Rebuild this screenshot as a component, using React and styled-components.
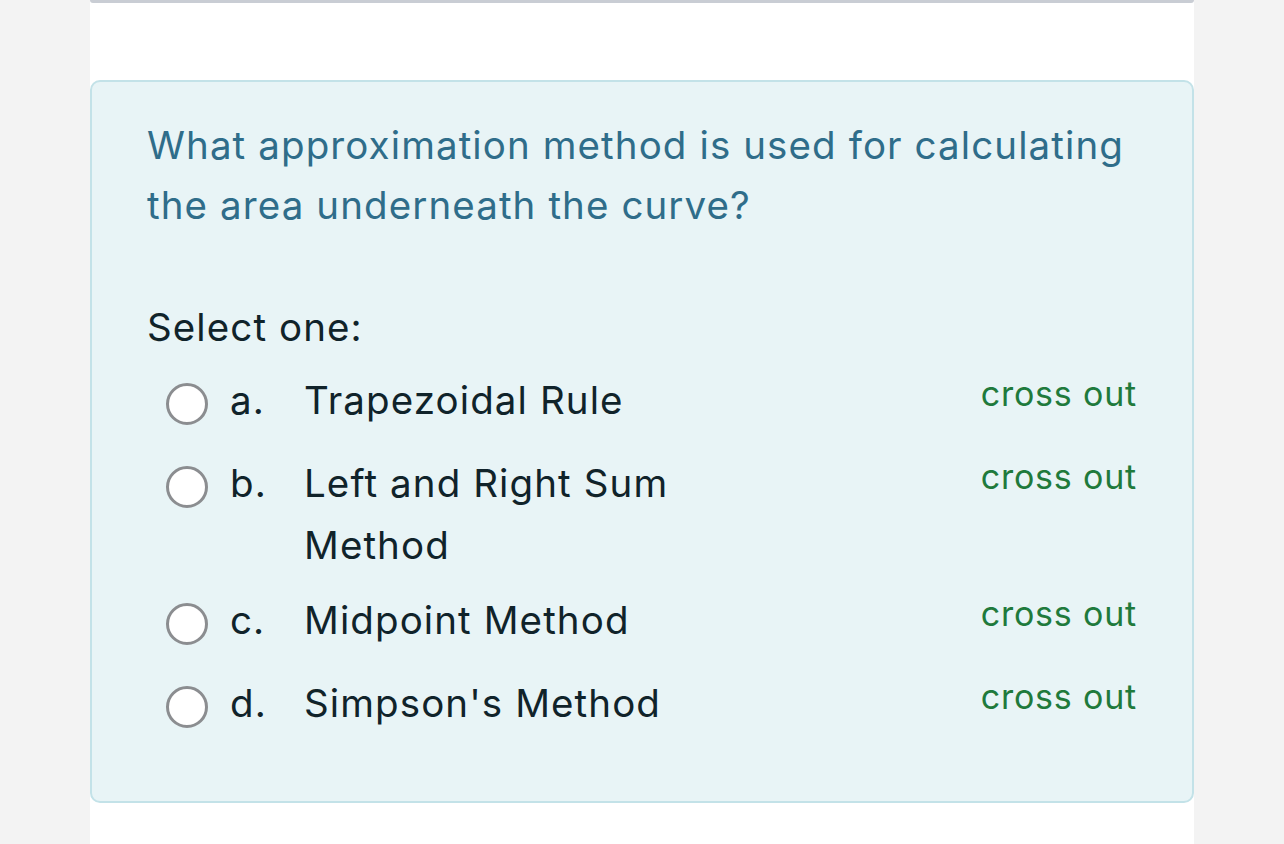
import React from "react";
import styled, { createGlobalStyle } from "styled-components";

const GlobalStyle = createGlobalStyle`
  html, body {
    margin: 0;
    padding: 0;
    background: #f3f3f3;
  }
  body {
    font-family: Inter, "Liberation Sans", Arial, sans-serif;
  }
`;

const Page = styled.div`
  width: 1104px;
  min-height: 844px;
  margin: 0 auto;
  background: #ffffff;
  display: flex;
  flex-direction: column;
`;

const TopBar = styled.div`
  height: 3px;
  background: #c9cdd4;
  border-radius: 0 0 4px 4px;
`;

const Card = styled.div`
  margin-top: 77px;
  background: #e8f4f6;
  border: 2px solid #c3e2e8;
  border-radius: 10px;
  padding: 33px 55px 59px 55px;
`;

const Question = styled.div`
  color: #2f6d8a;
  font-size: 38.5px;
  letter-spacing: 1.1px;
  line-height: 60px;
  max-width: 990px;
`;

const Prompt = styled.div`
  margin-top: 62px;
  color: #10232a;
  font-size: 38.5px;
  letter-spacing: 1.1px;
  line-height: 60px;
`;

const Options = styled.div`
  margin-top: 12px;
  display: flex;
  flex-direction: column;
  gap: 13px;
`;

const Option = styled.div`
  display: flex;
  align-items: flex-start;
  min-height: 70px;
  padding-left: 19px;
`;

const Radio = styled.span`
  flex: none;
  box-sizing: border-box;
  width: 42px;
  height: 42px;
  margin-top: 14px;
  border: 3px solid #8b8d90;
  border-radius: 50%;
  background: #ffffff;
`;

const Letter = styled.span`
  flex: none;
  width: 74px;
  margin-left: 22px;
  color: #10232a;
  font-size: 38.5px;
  letter-spacing: 1.1px;
  line-height: 62px;
`;

const Label = styled.span`
  flex: 1;
  max-width: 420px;
  color: #10232a;
  font-size: 38.5px;
  letter-spacing: 1.1px;
  line-height: 62px;
`;

const CrossOut = styled.span`
  margin-left: auto;
  color: #1f7a3c;
  font-size: 34px;
  letter-spacing: 0.8px;
  line-height: 50px;
`;

const answers = [
  { letter: "a.", text: "Trapezoidal Rule" },
  { letter: "b.", text: "Left and Right Sum Method" },
  { letter: "c.", text: "Midpoint Method" },
  { letter: "d.", text: "Simpson's Method" },
];

export default function App() {
  return (
    <>
      <GlobalStyle />
      <Page>
        <TopBar />
        <Card>
          <Question>
            What approximation method is used for calculating the area
            underneath the curve?
          </Question>
          <Prompt>Select one:</Prompt>
          <Options>
            {answers.map((a) => (
              <Option key={a.letter}>
                <Radio />
                <Letter>{a.letter}</Letter>
                <Label>{a.text}</Label>
                <CrossOut>cross out</CrossOut>
              </Option>
            ))}
          </Options>
        </Card>
      </Page>
    </>
  );
}
